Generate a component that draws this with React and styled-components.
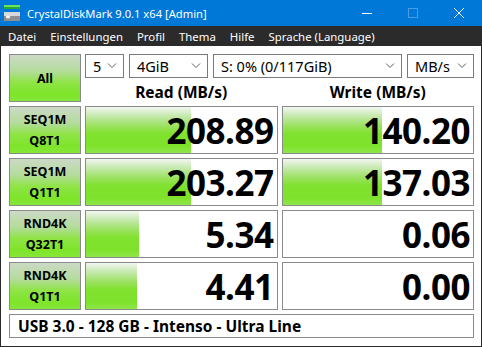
import React from "react";
import styled, { createGlobalStyle } from "styled-components";

const GlobalStyle = createGlobalStyle`
  html, body { margin: 0; padding: 0; background: #fff; }
  body { font-family: "Noto Sans", "Open Sans", sans-serif; }
  * { box-sizing: border-box; }
`;

const Window = styled.div`
  width: 482px;
  height: 347px;
  display: flex;
  flex-direction: column;
  overflow: hidden;
`;

const TitleBar = styled.div`
  height: 26px;
  background: #0078d7;
  display: flex;
  align-items: center;
  color: #fff;
  font-size: 11.2px;
  padding-left: 4px;
`;

const TitleText = styled.span`
  margin-left: 6px;
  flex: 1;
  white-space: nowrap;
`;

const CtrlBtn = styled.div`
  width: 46px;
  height: 26px;
  display: flex;
  align-items: center;
  justify-content: center;
`;

const MenuBar = styled.div`
  height: 20px;
  background: #2b2b2b;
  display: flex;
  align-items: center;
  color: #fff;
  font-size: 11.4px;
  padding-left: 8px;
  gap: 14px;
`;

const Content = styled.div`
  flex: 1;
  background: #fff;
  border: 1px solid #2b2b2b;
  border-top: none;
  padding: 8px 7px 8px 8px;
  display: flex;
  flex-direction: column;
  gap: 4px;
`;

const Grid = styled.div`
  display: grid;
  grid-template-columns: 72px 1fr 1fr;
  grid-auto-rows: 48px;
  column-gap: 4px;
  row-gap: 4px;
`;

const TestButton = styled.div`
  border: 1px solid #8a8a8a;
  background: linear-gradient(to bottom, #ccd9c6 0%, #b4dc9c 35%, #8ee445 60%, #7ee52a 85%, #86e638 100%);
  display: flex;
  flex-direction: column;
  align-items: center;
  justify-content: center;
  font-weight: 700;
  font-size: 12.5px;
  line-height: 21px;
  color: #000;
`;

const TopArea = styled.div`
  grid-column: 2 / span 2;
  display: flex;
  flex-direction: column;
`;

const ComboRow = styled.div`
  display: flex;
  gap: 5px;
  height: 24px;
`;

const Combo = styled.div`
  width: ${(p) => p.$w}px;
  flex: ${(p) => (p.$grow ? 1 : "none")};
  border: 1px solid #7a7a7a;
  background: #fff;
  display: flex;
  align-items: center;
  padding-left: 7px;
  padding-right: 6px;
  font-size: 14.5px;
  color: #000;
  white-space: nowrap;
`;

const ComboText = styled.span`
  flex: 1;
`;

const Headers = styled.div`
  flex: 1;
  display: grid;
  grid-template-columns: 1fr 1fr;
  column-gap: 4px;
  padding-top: 4px;
`;

const Header = styled.div`
  text-align: center;
  font-weight: 700;
  font-size: 15.5px;
  line-height: 20px;
  color: #000;
`;

const Cell = styled.div`
  position: relative;
  border: 1px solid #8a8a8a;
  background: #fff;
  display: flex;
  align-items: center;
  justify-content: flex-end;
  padding-right: 3px;
  overflow: hidden;
`;

const Bar = styled.div`
  position: absolute;
  left: 0;
  top: 0;
  bottom: 0;
  background: linear-gradient(to bottom, #f2f6f0 0%, #c9eab4 18%, #9de264 40%, #80e22e 58%, #7ee22c 85%, #8fe64a 100%);
`;

const Value = styled.span`
  position: relative;
  font-weight: 700;
  font-size: 35px;
  letter-spacing: -0.5px;
  color: #000;
  line-height: 1;
`;

const Footer = styled.div`
  height: 24px;
  border: 1px solid #8a8a8a;
  background: #fff;
  display: flex;
  align-items: center;
  padding-left: 8px;
  font-weight: 700;
  font-size: 15.5px;
  color: #000;
`;

const Chevron = () => (
  <svg width="10" height="6" viewBox="0 0 10 6">
    <path d="M1 0.5 L5 4.5 L9 0.5" fill="none" stroke="#606060" strokeWidth="1" />
  </svg>
);

const DriveIcon = () => (
  <svg width="17" height="18" viewBox="0 0 17 18">
    <rect x="0" y="1" width="16" height="2" fill="#6ee25a" />
    <rect x="0" y="3" width="16" height="2" fill="#22a83a" />
    <rect x="0" y="8" width="16" height="4" fill="#d8d8d8" />
    <rect x="0" y="12" width="16" height="5" fill="#8f8f8f" />
    <ellipse cx="4" cy="13" rx="2.2" ry="1.4" fill="#f4f4f4" />
  </svg>
);

const rows = [
  { l1: "SEQ1M", l2: "Q8T1", r: "208.89", rw: 55, w: "140.20", ww: 52 },
  { l1: "SEQ1M", l2: "Q1T1", r: "203.27", rw: 55, w: "137.03", ww: 52 },
  { l1: "RND4K", l2: "Q32T1", r: "5.34", rw: 28, w: "0.06", ww: 0 },
  { l1: "RND4K", l2: "Q1T1", r: "4.41", rw: 27, w: "0.00", ww: 0 },
];

const menus = ["Datei", "Einstellungen", "Profil", "Thema", "Hilfe", "Sprache (Language)"];

export default function App() {
  return (
    <>
      <GlobalStyle />
      <Window>
        <TitleBar>
          <DriveIcon />
          <TitleText>CrystalDiskMark 9.0.1 x64 [Admin]</TitleText>
          <CtrlBtn>
            <svg width="10" height="10" viewBox="0 0 10 10">
              <path d="M0 5.5 H10" stroke="#fff" strokeWidth="1" />
            </svg>
          </CtrlBtn>
          <CtrlBtn>
            <svg width="10" height="10" viewBox="0 0 10 10">
              <rect x="0.5" y="0.5" width="9" height="9" fill="none" stroke="#4d9be0" strokeWidth="1" />
            </svg>
          </CtrlBtn>
          <CtrlBtn>
            <svg width="10" height="10" viewBox="0 0 10 10">
              <path d="M0 0 L10 10 M10 0 L0 10" stroke="#fff" strokeWidth="1" />
            </svg>
          </CtrlBtn>
        </TitleBar>
        <MenuBar>
          {menus.map((m) => (
            <span key={m}>{m}</span>
          ))}
        </MenuBar>
        <Content>
          <Grid>
            <TestButton>All</TestButton>
            <TopArea>
              <ComboRow>
                <Combo $w={39}>
                  <ComboText>5</ComboText>
                  <Chevron />
                </Combo>
                <Combo $w={79}>
                  <ComboText>4GiB</ComboText>
                  <Chevron />
                </Combo>
                <Combo $grow>
                  <ComboText>S: 0% (0/117GiB)</ComboText>
                  <Chevron />
                </Combo>
                <Combo $w={67}>
                  <ComboText>MB/s</ComboText>
                  <Chevron />
                </Combo>
              </ComboRow>
              <Headers>
                <Header>Read (MB/s)</Header>
                <Header>Write (MB/s)</Header>
              </Headers>
            </TopArea>
            {rows.map((r) => (
              <React.Fragment key={r.l1 + r.l2}>
                <TestButton>
                  <span>{r.l1}</span>
                  <span>{r.l2}</span>
                </TestButton>
                <Cell>
                  {r.rw > 0 && <Bar style={{ width: `${r.rw}%` }} />}
                  <Value>{r.r}</Value>
                </Cell>
                <Cell>
                  {r.ww > 0 && <Bar style={{ width: `${r.ww}%` }} />}
                  <Value>{r.w}</Value>
                </Cell>
              </React.Fragment>
            ))}
          </Grid>
          <Footer>USB 3.0 - 128 GB - Intenso - Ultra Line</Footer>
        </Content>
      </Window>
    </>
  );
}
